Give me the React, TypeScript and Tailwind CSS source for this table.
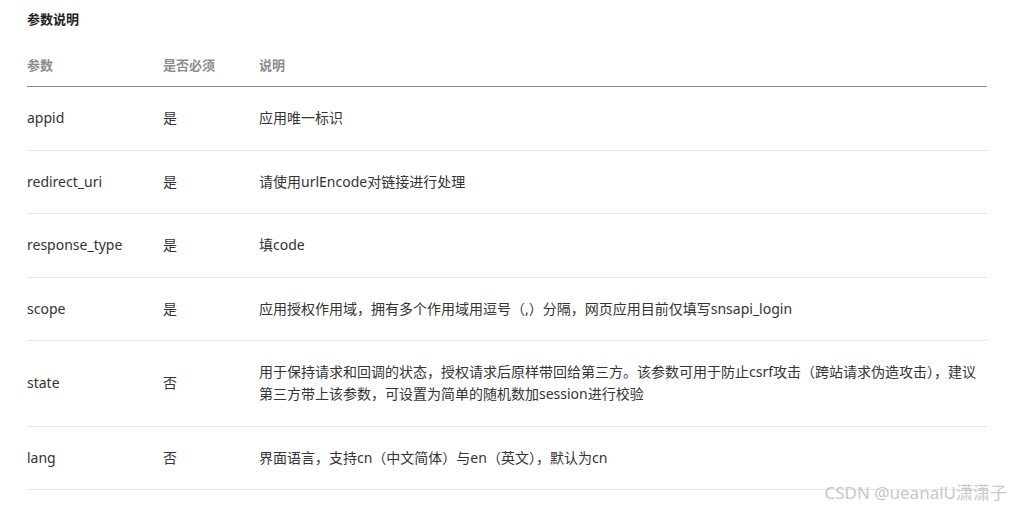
const rows: { name: string; required: string; desc: string }[] = [
  { name: 'appid', required: '是', desc: '应用唯一标识' },
  { name: 'redirect_uri', required: '是', desc: '请使用urlEncode对链接进行处理' },
  { name: 'response_type', required: '是', desc: '填code' },
  {
    name: 'scope',
    required: '是',
    desc: '应用授权作用域，拥有多个作用域用逗号（,）分隔，网页应用目前仅填写snsapi_login',
  },
  {
    name: 'state',
    required: '否',
    desc: '用于保持请求和回调的状态，授权请求后原样带回给第三方。该参数可用于防止csrf攻击（跨站请求伪造攻击），建议第三方带上该参数，可设置为简单的随机数加session进行校验',
  },
  { name: 'lang', required: '否', desc: '界面语言，支持cn（中文简体）与en（英文），默认为cn' },
];

export default function App() {
  return (
    <div className="relative h-[511px] w-[1012px] overflow-hidden bg-white px-[27px] pt-[10px] font-['Noto_Sans','Noto_Sans_CJK_SC',sans-serif] text-[14px] text-[#333]">
      <h3 className="text-[13px] font-bold leading-[18px] text-[#222]">参数说明</h3>

      <table className="mt-[16px] w-[960px] border-collapse">
        <thead>
          <tr className="border-b border-[#8c8c8c] text-left text-[13px] font-bold text-[#8c8c8c]">
            <th className="w-[136px] py-[10px] leading-[22px]">参数</th>
            <th className="w-[96px] py-[10px] leading-[22px]">是否必须</th>
            <th className="py-[10px] leading-[22px]">说明</th>
          </tr>
        </thead>
        <tbody>
          {rows.map((r) => (
            <tr key={r.name} className="border-b border-[#e6e6e6] align-middle">
              <td className="py-[20.25px] leading-[22px]">{r.name}</td>
              <td className="py-[20.25px] leading-[22px]">{r.required}</td>
              <td className="py-[20.25px] pr-1 leading-[22px]">{r.desc}</td>
            </tr>
          ))}
        </tbody>
      </table>

      <div className="absolute bottom-[7px] right-[5px] text-[17px] leading-[22px] text-[#c8c8c8]">
        CSDN @ueanalU潇潇子
      </div>
    </div>
  );
}
